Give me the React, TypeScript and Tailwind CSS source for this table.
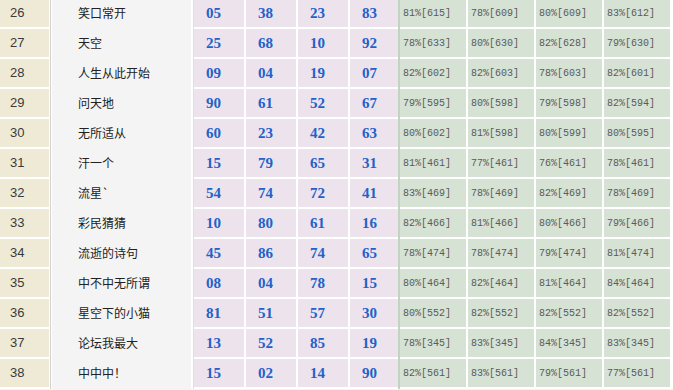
import React from "react";

type Row = [string, string, string[], string[]];

const rows: Row[] = [
  ["26", "笑口常开", ["05", "38", "23", "83"], ["81%[615]", "78%[609]", "80%[609]", "83%[612]"]],
  ["27", "天空", ["25", "68", "10", "92"], ["78%[633]", "80%[630]", "82%[628]", "79%[630]"]],
  ["28", "人生从此开始", ["09", "04", "19", "07"], ["82%[602]", "82%[603]", "78%[603]", "82%[601]"]],
  ["29", "问天地", ["90", "61", "52", "67"], ["79%[595]", "80%[598]", "79%[598]", "82%[594]"]],
  ["30", "无所适从", ["60", "23", "42", "63"], ["80%[602]", "81%[598]", "80%[599]", "80%[595]"]],
  ["31", "汗一个", ["15", "79", "65", "31"], ["81%[461]", "77%[461]", "76%[461]", "78%[461]"]],
  ["32", "流星`", ["54", "74", "72", "41"], ["83%[469]", "78%[469]", "82%[469]", "78%[469]"]],
  ["33", "彩民猜猜", ["10", "80", "61", "16"], ["82%[466]", "81%[466]", "80%[466]", "79%[466]"]],
  ["34", "流逝的诗句", ["45", "86", "74", "65"], ["78%[474]", "78%[474]", "79%[474]", "81%[474]"]],
  ["35", "中不中无所谓", ["08", "04", "78", "15"], ["80%[464]", "82%[464]", "81%[464]", "84%[464]"]],
  ["36", "星空下的小猫", ["81", "51", "57", "30"], ["80%[552]", "82%[552]", "82%[552]", "82%[552]"]],
  ["37", "论坛我最大", ["13", "52", "85", "19"], ["78%[345]", "83%[345]", "84%[345]", "83%[345]"]],
  ["38", "中中中！", ["15", "02", "14", "90"], ["82%[561]", "83%[561]", "79%[561]", "77%[561]"]],
];

const pinkW = ["w-[50px]", "w-[50px]", "w-[50px]", "w-[48px]"];

export default function App() {
  return (
    <div className="w-[673px] h-[390px] overflow-hidden bg-[#f3f5ee]">
      <div className="flex flex-col -mt-[1px] bg-white">
        {rows.map(([n, name, nums, pcts]) => (
          <div key={n} className="flex h-[30px]">
            <div className="w-[49px] h-[28px] bg-[#efead6] flex items-center pl-[10px] text-[13px] text-[#3a3a3a] [font-family:'Liberation_Sans',Arial,sans-serif]">
              {n}
            </div>
            <div className="w-[3px] h-[30px] border-x border-white bg-[#d2d2d2]" />
            <div className="w-[139px] h-[30px] bg-[#f4f4f4] flex items-center pb-[2px] pl-[26px] text-[12px] text-[#222] [font-family:'Noto_Sans_CJK_SC','Noto_Sans',sans-serif]">
              {name}
            </div>
            <div className="w-[3px] h-[30px] bg-white border-r border-[#e6dbe6]" />
            <div className="flex gap-[2px]">
              {nums.map((v, i) => (
                <div
                  key={i}
                  className={`${pinkW[i]} h-[28px] bg-[#ede3ed] flex items-center pl-[12px] text-[15px] font-bold text-[#2162c9] [font-family:'Liberation_Serif','Times_New_Roman',serif]`}
                >
                  {v}
                </div>
              ))}
            </div>
            <div className="w-[2px] h-[30px] bg-[#c3d3c3]" />
            <div className="flex gap-[2px]">
              {pcts.map((v, i) => (
                <div
                  key={i}
                  className="w-[66px] h-[28px] bg-[#d5e2d4] flex items-center pl-[3px] text-[10px] text-[#5a5a5a] [font-family:'Liberation_Mono','Courier_New',monospace]"
                >
                  {v}
                </div>
              ))}
            </div>
            <div className="w-[3px] h-[30px] bg-white" />
          </div>
        ))}
      </div>
    </div>
  );
}
